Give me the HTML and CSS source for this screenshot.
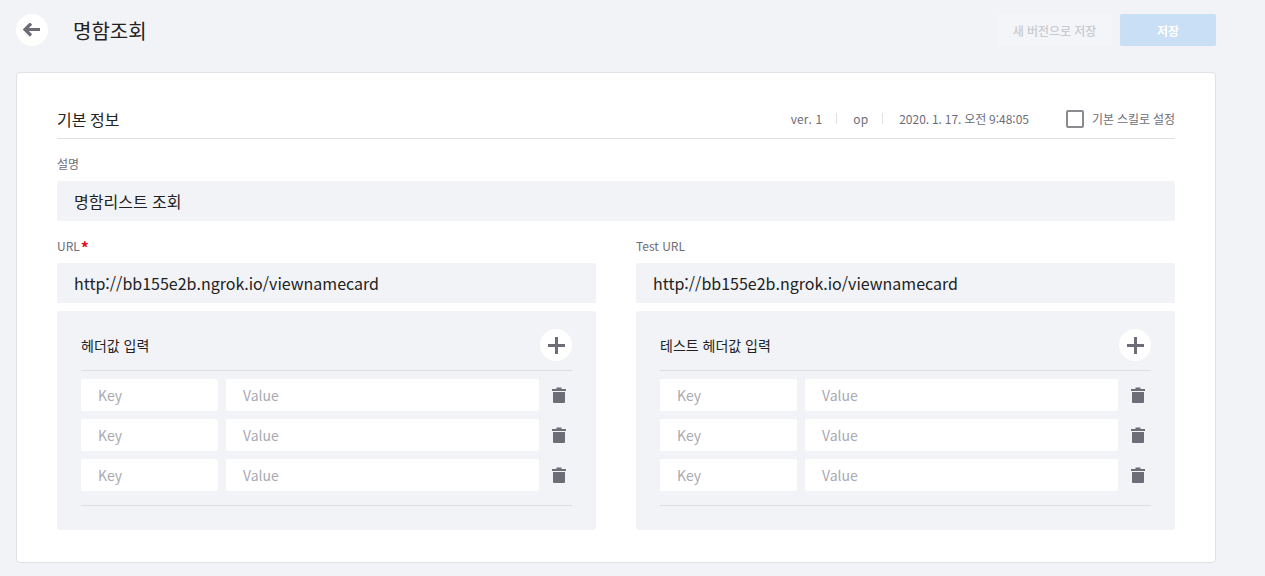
FILE: index.html
```html
<!DOCTYPE html>
<html lang="ko">
<head>
<meta charset="utf-8">
<title>명함조회</title>
<link rel="stylesheet" href="styles.css">
</head>
<body>
<header class="topbar">
  <div class="title-group">
    <button class="back" aria-label="back">
      <svg width="18" height="14" viewBox="0 0 18 14"><path d="M8 0.500 2 6.500l6 6M2.500 6.500H17" fill="none" stroke="#6d6d78" stroke-width="3.200"/></svg>
    </button>
    <h1>명함조회</h1>
  </div>
  <div class="actions">
    <button class="btn btn-ghost">새 버전으로 저장</button>
    <button class="btn btn-primary">저장</button>
  </div>
</header>
<main class="card">
  <div class="section-head">
    <h2>기본 정보</h2>
    <div class="meta">
      <span class="meta-item">ver. 1</span>
      <span class="meta-item">op</span>
      <span class="meta-item meta-last">2020. 1. 17. 오전 9:48:05</span>
      <label class="check"><span class="box"></span>기본 스킬로 설정</label>
    </div>
  </div>
  <div class="label label-desc">설명</div>
  <div class="field">명함리스트 조회</div>
  <div class="cols">
    <section class="col">
      <div class="label">URL<span class="req">*</span></div>
      <div class="field">http://bb155e2b.ngrok.io/viewnamecard</div>
      <div class="panel">
        <div class="panel-head"><span>헤더값 입력</span>
          <span class="plus"><svg width="17" height="17" viewBox="0 0 17 17"><path d="M8.500 0v17M0 8.500h17" stroke="#6d6d78" stroke-width="3"/></svg></span></div>
        <div class="rows">
          <div class="row"><div class="key">Key</div><div class="value">Value</div><svg class="trash" width="14" height="16" viewBox="0 0 14 16"><path d="M0 2h4.500V.5h5V2H14v2H0zM1 5h12v10a1 1 0 0 1-1 1H2a1 1 0 0 1-1-1z" fill="#6d6d78"/></svg></div>
          <div class="row"><div class="key">Key</div><div class="value">Value</div><svg class="trash" width="14" height="16" viewBox="0 0 14 16"><path d="M0 2h4.500V.5h5V2H14v2H0zM1 5h12v10a1 1 0 0 1-1 1H2a1 1 0 0 1-1-1z" fill="#6d6d78"/></svg></div>
          <div class="row"><div class="key">Key</div><div class="value">Value</div><svg class="trash" width="14" height="16" viewBox="0 0 14 16"><path d="M0 2h4.500V.5h5V2H14v2H0zM1 5h12v10a1 1 0 0 1-1 1H2a1 1 0 0 1-1-1z" fill="#6d6d78"/></svg></div>
        </div>
      </div>
    </section>
    <section class="col">
      <div class="label">Test URL</div>
      <div class="field">http://bb155e2b.ngrok.io/viewnamecard</div>
      <div class="panel">
        <div class="panel-head"><span>테스트 헤더값 입력</span>
          <span class="plus"><svg width="17" height="17" viewBox="0 0 17 17"><path d="M8.500 0v17M0 8.500h17" stroke="#6d6d78" stroke-width="3"/></svg></span></div>
        <div class="rows">
          <div class="row"><div class="key">Key</div><div class="value">Value</div><svg class="trash" width="14" height="16" viewBox="0 0 14 16"><path d="M0 2h4.500V.5h5V2H14v2H0zM1 5h12v10a1 1 0 0 1-1 1H2a1 1 0 0 1-1-1z" fill="#6d6d78"/></svg></div>
          <div class="row"><div class="key">Key</div><div class="value">Value</div><svg class="trash" width="14" height="16" viewBox="0 0 14 16"><path d="M0 2h4.500V.5h5V2H14v2H0zM1 5h12v10a1 1 0 0 1-1 1H2a1 1 0 0 1-1-1z" fill="#6d6d78"/></svg></div>
          <div class="row"><div class="key">Key</div><div class="value">Value</div><svg class="trash" width="14" height="16" viewBox="0 0 14 16"><path d="M0 2h4.500V.5h5V2H14v2H0zM1 5h12v10a1 1 0 0 1-1 1H2a1 1 0 0 1-1-1z" fill="#6d6d78"/></svg></div>
        </div>
      </div>
    </section>
  </div>
</main>
</body>
</html>
```
FILE: styles.css
```css
* { box-sizing: border-box; }
html, body { margin: 0; height: 576px; overflow: hidden; }
body {
  background: #f2f3f7;
  padding: 14px 49px 0 16px;
  font-family: "Noto Sans CJK KR", "Noto Sans", sans-serif;
  color: #222;
}
.topbar { display: flex; justify-content: space-between; align-items: center; height: 32px; }
.title-group { display: flex; align-items: center; gap: 25px; }
.back { width: 32px; height: 32px; border: 0; padding: 0; border-radius: 50%; background: #fff; display: flex; align-items: center; justify-content: center; }
h1 { margin: 0; font-size: 20px; font-weight: 400; color: #222; }
.actions { display: flex; gap: 8px; }
.btn { height: 32px; border: 0; border-radius: 2px; font: 700 12px "Noto Sans CJK KR", sans-serif; color: #fff; }
.btn-ghost { width: 115px; background: #f4f5f8; color: #c9cacf; font-weight: 500; letter-spacing: -0.05px; }
.btn-primary { width: 96px; background: #c8dff5; }
.card { margin-top: 26px; height: 491px; background: #fff; border: 1px solid #e0e1e6; border-radius: 4px; padding: 24px 40px 0; }
.section-head { display: flex; justify-content: space-between; align-items: center; height: 42px; padding-top: 2px; border-bottom: 1px solid #dfe0e4; }
h2 { margin: 0; font-size: 16px; font-weight: 400; color: #222; word-spacing: -1px; }
.meta { display: flex; align-items: center; font-size: 12px; color: #6d6d78; font-weight: 400; }
.meta-item { padding-right: 14px; margin-right: 16px; border-right: 1px solid #dfe0e4; line-height: 11px; letter-spacing: 0.1px; }
.meta-last { border: 0; padding: 0; margin-right: 37px; letter-spacing: 0; word-spacing: -0.6px; }
.check { display: flex; align-items: center; gap: 8px; word-spacing: -0.5px; }
.box { width: 18px; height: 18px; border: 2px solid #8a8a90; border-radius: 2px; }
.label { font-size: 12px; color: #6d6d78; height: 18px; line-height: 18px; margin-bottom: 8px; font-weight: 400; }
.label-desc { margin-top: 16px; }
.req { color: #e5101f; font-size: 16px; font-weight: 700; line-height: 12px; margin-left: 1px; vertical-align: -3px; }
.field { height: 40px; line-height: 40px; padding: 0 17px; background: #f2f3f7; font-size: 16px; color: #222; border-radius: 2px; }
.cols { display: grid; grid-template-columns: 539px 539px; gap: 40px; margin-top: 16px; }
.panel { margin-top: 8px; height: 219px; background: #f2f3f7; padding: 18px 24px 0; border-radius: 3px; }
.panel-head { display: flex; justify-content: space-between; align-items: center; padding-bottom: 9px; border-bottom: 1px solid #dcdde2; font-size: 14px; font-weight: 400; box-sizing: content-box; height: 32px; }
.plus { width: 32px; height: 32px; border-radius: 50%; background: #fff; display: flex; align-items: center; justify-content: center; }
.rows { padding: 8px 0 14px; border-bottom: 1px solid #dcdde2; display: flex; flex-direction: column; gap: 8px; }
.row { display: flex; gap: 8px; height: 32px; align-items: center; }
.key, .value { height: 32px; line-height: 32px; background: #fff; padding: 0 17px; font-size: 14px; color: #a9aab2; border-radius: 2px; }
.key { width: 137px; }
.value { width: 313px; }
.trash { margin-left: 5px; }
```
